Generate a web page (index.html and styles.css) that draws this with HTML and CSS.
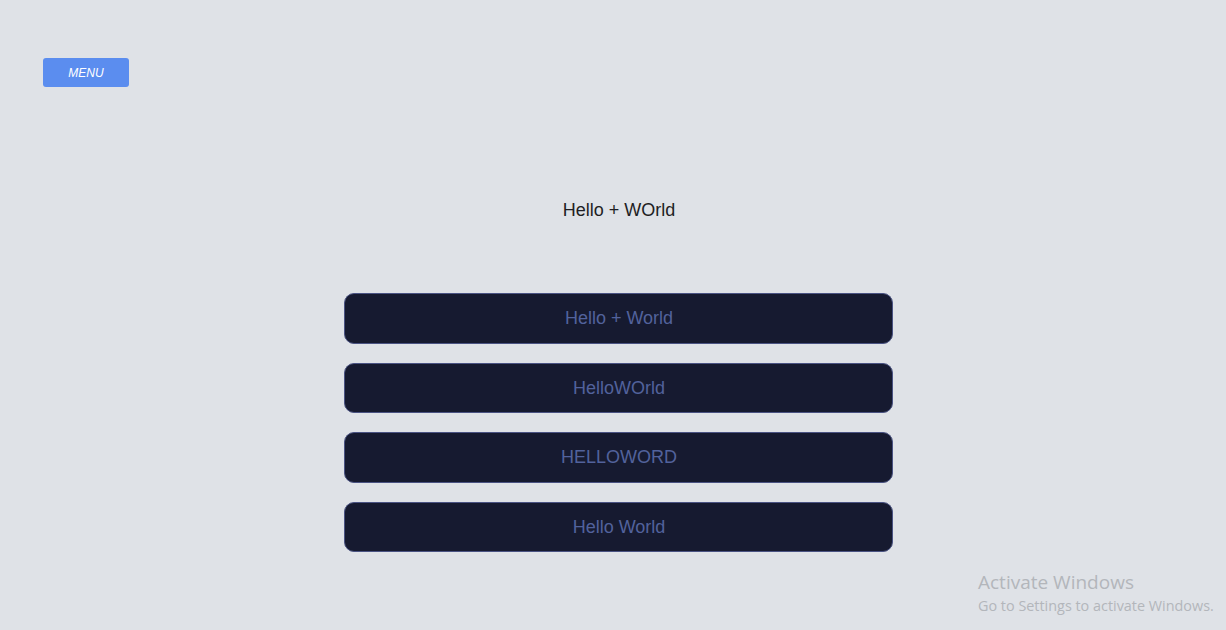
FILE: index.html
```html
<!DOCTYPE html>
<html>
<head>
<meta charset="utf-8">
<link rel="stylesheet" href="styles.css">
</head>
<body>
<header class="top">
  <button class="menu-btn">MENU</button>
</header>
<main class="main">
  <h1 class="title">Hello + WOrld</h1>
  <div class="list">
    <button class="item">Hello + World</button>
    <button class="item">HelloWOrld</button>
    <button class="item">HELLOWORD</button>
    <button class="item">Hello World</button>
  </div>
</main>
<div class="watermark">
  <div class="wm-title">Activate Windows</div>
  <div class="wm-sub">Go to Settings to activate Windows.</div>
</div>
</body>
</html>
```

FILE: styles.css
```css
html, body {
  margin: 0;
  padding: 0;
  height: 100%;
}
body {
  background: #dfe2e7;
  font-family: "Liberation Sans", Arial, sans-serif;
  overflow: hidden;
}
.top {
  padding: 58px 0 0 43px;
  height: 29px;
}
.menu-btn {
  width: 86px;
  height: 29px;
  background: #5b8def;
  color: #ffffff;
  border: none;
  border-radius: 3px;
  font-family: "Liberation Sans", Arial, sans-serif;
  font-style: italic;
  font-size: 12px;
  padding: 0;
  display: block;
}
.main {
  display: flex;
  flex-direction: column;
  align-items: center;
  padding-left: 10px;
}
.title {
  margin: 112px 0 0 2px;
  font-size: 18px;
  font-weight: normal;
  color: #1e1e24;
  line-height: 22px;
}
.list {
  margin-top: 72px;
  display: flex;
  flex-direction: column;
  gap: 19px;
  width: 549px;
}
.item {
  height: 51px;
  background: #161a30;
  border: 1px solid #4a5383;
  border-radius: 10px;
  color: #52629c;
  font-family: "Liberation Sans", Arial, sans-serif;
  font-size: 18px;
  padding: 0 0 0 2px;
}
.item:nth-child(2), .item:nth-child(4) {
  height: 50px;
}
.watermark {
  position: absolute;
  left: 978px;
  top: 569px;
  color: #b3b6bb;
  font-family: "Open Sans", "Noto Sans", sans-serif;
}
.wm-title {
  font-size: 19px;
  line-height: 27px;
}
.wm-sub {
  font-size: 14.4px;
  line-height: 20px;
}
```
